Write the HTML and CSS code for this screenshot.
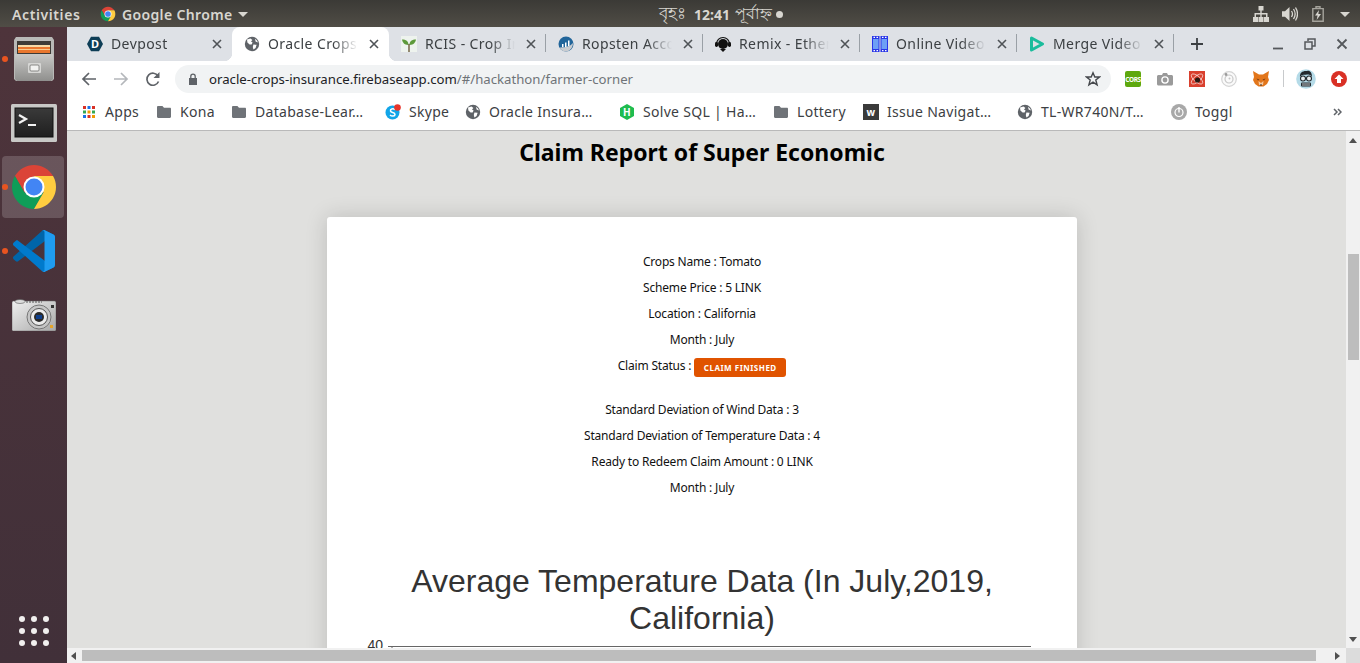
FILE: index.html
```html
<!DOCTYPE html>
<html lang="en">
<head>
<meta charset="utf-8">
<title>Oracle Crops Insurance</title>
<link rel="stylesheet" href="styles.css">
</head>
<body>
<svg class="defs" width="0" height="0">
  <defs>
    <symbol id="chrome" viewBox="0 0 48 48">
      <path fill="#db4437" d="M43.05 13A22 22 0 0 0 4.95 13L14.47 29.5 24 13Z"/>
      <path fill="#0f9d58" d="M4.95 13A22 22 0 0 0 24 46L33.53 29.5H14.47Z"/>
      <path fill="#ffcd40" d="M43.05 13A22 22 0 0 1 24 46L33.53 29.5 24 13Z"/>
      <circle cx="24" cy="24" r="10.5" fill="#fff"/>
      <circle cx="24" cy="24" r="8.5" fill="#4285f4"/>
    </symbol>
    <symbol id="globe" viewBox="0 0 16 16">
      <circle cx="8" cy="8" r="7.2" fill="#5f6368"/>
      <path fill="#fff" d="M3 3.6 6.5 2.6 8.4 4 7 5.4 8.6 6.6 7.6 8.6 5.6 8.4 3.4 6.4ZM9.4 8.6 12.6 8.8 11.6 12 9.4 13.6 8.8 11Z M11 2.8 13 4.4 14 6.6 11.6 5.6Z"/>
    </symbol>
    <symbol id="folder" viewBox="0 0 16 16">
      <path fill="#6f7378" d="M1 3.2C1 2.5 1.5 2 2.2 2H6.4L8 3.8H14C14.6 3.8 15 4.3 15 4.8V12.8C15 13.5 14.5 14 13.8 14H2.2C1.5 14 1 13.5 1 12.8Z"/>
    </symbol>
    <symbol id="close" viewBox="0 0 12 12">
      <path stroke="#4f5357" stroke-width="1.6" fill="none" d="M2 2 10 10M10 2 2 10"/>
    </symbol>
  </defs>
</svg>

<header class="topbar">
  <div class="topbar-left">
    <span class="activities">Activities</span>
    <span class="appmenu">
      <svg class="appmenu-icon"><use href="#chrome"/></svg>
      <span class="appmenu-name">Google Chrome</span>
      <svg class="caret" viewBox="0 0 10 5"><path d="M0 0H10L5 5Z"/></svg>
    </span>
  </div>
  <div class="clock"><span class="clock-day">বৃহঃ</span><b class="clock-time">12:41</b><span class="clock-ampm">পূর্বাহ্ন</span><i class="clock-dot"></i></div>
  <div class="tray">
    <svg class="tray-net" viewBox="0 0 16 16"><path fill="#d8d6d0" d="M5.5 0H10.500V4.500H8.700V7H14.500V11H16V16H11V11H13V8.500H8.700V11H10.500V16H5.500V11H7.300V8.500H3V11H5V16H0V11H1.500V7H7.300V4.500H5.500Z"/></svg>
    <svg class="tray-vol" viewBox="0 0 16 16"><path fill="#d8d6d0" d="M0 5.200H3L7.500 1V15L3 10.800H0Z"/><path fill="none" stroke="#d8d6d0" stroke-width="1.300" d="M9.500 5Q11.500 8 9.500 11M11.500 3Q14.800 8 11.500 13M13.500 1.500Q17.500 8 13.500 14.500"/></svg>
    <svg class="tray-bat" viewBox="0 0 12 16"><path fill="none" stroke="#a5a39c" stroke-width="1.400" d="M.8 2.600H11.200V15.300H.8ZM4 2.600V.8H8V2.600"/><path fill="#d8d6d0" d="M7 4 3 9.500H5.600L4.600 14 9 8H6.300Z"/></svg>
    <svg class="caret" viewBox="0 0 10 5"><path d="M0 0H10L5 5Z"/></svg>
  </div>
</header>

<div class="desktop">
  <nav class="dock">
    <div class="dock-item">
      <i class="run-dot"></i>
      <svg class="dock-files" viewBox="0 0 40 44">
        <defs><linearGradient id="cab" x1="0" y1="0" x2="0" y2="1"><stop offset="0" stop-color="#c9c9c7"/><stop offset="1" stop-color="#8f8f8d"/></linearGradient></defs>
        <path fill="#b9b9b7" d="M2 0H38L40 3V42L38 44H2L0 42V3Z"/>
        <rect x="3" y="4" width="34" height="13" fill="#3d3a36"/>
        <rect x="4" y="9" width="32" height="7" fill="#e9772e"/>
        <rect x="4" y="8" width="32" height="2" fill="#f5d9a6"/>
        <rect x="4" y="12" width="32" height="1" fill="#f9c98b"/>
        <path fill="url(#cab)" d="M1 17H39V42L37 44H3L1 42Z"/>
        <rect x="14" y="26" width="13" height="10" rx="1" fill="#d7d7d5"/>
        <rect x="16" y="28" width="9" height="6" rx="1" fill="#f2f2f0" stroke="#6f6f6d" stroke-width=".8"/>
      </svg>
    </div>
    <div class="dock-item">
      <svg class="dock-term" viewBox="0 0 46 38">
        <defs><linearGradient id="termbg" x1="0" y1="0" x2="0" y2="1"><stop offset="0" stop-color="#3a3a3a"/><stop offset="1" stop-color="#1f1f1f"/></linearGradient></defs>
        <rect width="46" height="38" rx="1.500" fill="#c8c8c6"/>
        <rect x="4" y="4" width="38" height="29" fill="url(#termbg)" stroke="#111"/>
        <path d="M8 11 15 15 8 19" fill="none" stroke="#f2f2f2" stroke-width="2.200"/>
        <rect x="17" y="20" width="8" height="2" fill="#f2f2f2"/>
      </svg>
    </div>
    <div class="dock-item dock-active">
      <i class="run-dot"></i>
      <svg class="dock-chrome"><use href="#chrome"/></svg>
    </div>
    <div class="dock-item">
      <i class="run-dot"></i>
      <svg class="dock-code" viewBox="0 0 100 100">
        <path fill="#0065a9" d="M96.460 10.800 75.860.9C73.470-.25 70.620.23 68.750 2.110L1.300 63.200C-.51 64.850-.51 67.700 1.310 69.350L6.820 74.350C8.310 75.700 10.550 75.800 12.150 74.590L93.360 13.370C96.080 11.310 100 13.250 100 16.670V16.430C100 14.030 98.620 11.840 96.460 10.800Z"/>
        <path fill="#007acc" d="M96.460 89.200 75.860 99.100C73.470 100.250 70.620 99.770 68.750 97.890L1.300 36.800C-.51 35.150-.51 32.300 1.310 30.650L6.820 25.650C8.310 24.300 10.550 24.200 12.150 25.410L93.360 86.630C96.080 88.690 100 86.750 100 83.330V83.570C100 85.970 98.620 88.160 96.460 89.200Z"/>
        <path fill="#1f9cf0" d="M75.860 99.130C73.470 100.280 70.620 99.790 68.750 97.920 71.060 100.230 75 98.590 75 95.340V4.660C75 1.400 71.060-.23 68.750 2.080 70.620.21 73.470-.28 75.860.87L96.460 10.780C98.600 11.810 100 14 100 16.380V83.620C100 86 98.640 88.190 96.460 89.240Z"/>
      </svg>
    </div>
    <div class="dock-item">
      <svg class="dock-cam" viewBox="0 0 44 32">
        <defs><linearGradient id="body" x1="0" y1="0" x2="1" y2="1"><stop offset="0" stop-color="#f0f0f0"/><stop offset="1" stop-color="#a8a8a8"/></linearGradient></defs>
        <rect y="2" width="44" height="30" rx="1.500" fill="url(#body)" stroke="#666" stroke-width=".5"/>
        <ellipse cx="8" cy="2.500" rx="5" ry="2" fill="#ddd" stroke="#555" stroke-width=".6"/>
        <path d="M14 3H30" stroke="#555" stroke-width="1" stroke-dasharray="2 1"/>
        <circle cx="27" cy="18" r="12" fill="#c6c6c6" stroke="#777"/>
        <circle cx="27" cy="18" r="8.500" fill="#ececec" stroke="#555"/>
        <circle cx="27" cy="18" r="5" fill="#2a2a2a"/>
        <rect x="24" y="16" width="6" height="4" fill="#0f3f8a"/>
        <rect x="38" y="26" width="3" height="3" fill="#e6a42a"/>
        <rect x="39" y="6" width="3" height="3" fill="#333"/>
      </svg>
    </div>
    <div class="dock-apps">
      <i></i><i></i><i></i><i></i><i></i><i></i><i></i><i></i><i></i>
    </div>
  </nav>

  <main class="browser">
    <div class="tabstrip">
      <div class="tab tab-sep-off">
        <svg class="fav" viewBox="0 0 16 16"><path fill="#0d3d56" d="M4 .8H12L16 8 12 15.200H4L0 8Z"/><text class="fav-d" x="8" y="11.700">D</text></svg>
        <span class="tab-title">Devpost</span>
        <svg class="tab-x"><use href="#close"/></svg>
      </div>
      <div class="tab tab-active">
        <svg class="fav"><use href="#globe"/></svg>
        <span class="tab-title">Oracle Crops Insurance</span>
        <svg class="tab-x"><use href="#close"/></svg>
      </div>
      <div class="tab">
        <svg class="fav" viewBox="0 0 16 16"><rect width="16" height="16" fill="#eef3ee"/><path fill="#5d9a3a" d="M7.500 9C3 9 1.500 6 1 3.500 5 3.500 7.500 5 7.500 9ZM8.500 9C8.500 5 11 3.500 15 3.500 14.500 6 13 9 8.500 9Z"/><rect x="7.300" y="8" width="1.400" height="8" fill="#6b5a3a"/></svg>
        <span class="tab-title">RCIS - Crop Insurance</span>
        <svg class="tab-x"><use href="#close"/></svg>
      </div>
      <div class="tab">
        <svg class="fav" viewBox="0 0 16 16"><circle cx="8" cy="8" r="7.500" fill="#21659a"/><path fill="#c9ccd0" d="M1.500 11.500C5 11.500 12 11 15 7 15 12 11 15.500 8 15.500 5 15.500 3 14 1.500 11.500Z"/><path fill="#fff" d="M4 8H5.500V11H4ZM7 6.500H8.500V11H7ZM10 4.500H11.500V10H10Z"/></svg>
        <span class="tab-title">Ropsten Accounts</span>
        <svg class="tab-x"><use href="#close"/></svg>
      </div>
      <div class="tab">
        <svg class="fav" viewBox="0 0 16 16"><path fill="none" stroke="#111" stroke-width="1.200" d="M1.500 8A6.500 6.500 0 0 1 14.500 8"/><circle cx="8" cy="8" r="5" fill="#111"/><rect x="0" y="6" width="3" height="5" rx="1.400" fill="#111"/><rect x="13" y="6" width="3" height="5" rx="1.400" fill="#111"/><path fill="#111" d="M5 13H11L8 16Z"/></svg>
        <span class="tab-title">Remix - Ethereum IDE</span>
        <svg class="tab-x"><use href="#close"/></svg>
      </div>
      <div class="tab">
        <svg class="fav" viewBox="0 0 16 16"><rect width="7.500" height="16" fill="#2a36e8"/><rect x="8.500" width="7.500" height="16" fill="#2a36e8"/><rect x="1" y="3" width="5.500" height="10" fill="#6ea0f5"/><rect x="9.500" y="3" width="5.500" height="10" fill="#6ea0f5"/><path d="M1.500 .8H3V2H1.500ZM4.500 .8H6V2H4.500ZM10 .8H11.500V2H10ZM13 .8H14.500V2H13ZM1.500 14H3V15.200H1.500ZM4.500 14H6V15.200H4.500ZM10 14H11.500V15.200H10ZM13 14H14.500V15.200H13Z" fill="#fff"/></svg>
        <span class="tab-title">Online Video Cutter</span>
        <svg class="tab-x"><use href="#close"/></svg>
      </div>
      <div class="tab">
        <svg class="fav" viewBox="0 0 16 16"><path fill="none" stroke="#1abc9c" stroke-width="3" stroke-linejoin="round" d="M2.500 2 13.500 8 2.500 14Z"/></svg>
        <span class="tab-title">Merge Video Online</span>
        <svg class="tab-x"><use href="#close"/></svg>
      </div>
      <svg class="tab-new" viewBox="0 0 12 12"><path d="M6 0V12M0 6H12" stroke="#3c4043" stroke-width="1.800"/></svg>
      <div class="winctl">
        <svg viewBox="0 0 12 12"><path d="M1 10.500H11" stroke="#55585c" stroke-width="1.800"/></svg>
        <svg viewBox="0 0 12 12"><path fill="none" stroke="#55585c" stroke-width="1.500" d="M4 3V1H11V8H8.500M1 4H8V11H1Z"/></svg>
        <svg viewBox="0 0 12 12"><path d="M1.500 1.500 10.500 10.500M10.500 1.500 1.500 10.500" stroke="#55585c" stroke-width="1.800"/></svg>
      </div>
    </div>

    <div class="toolbar">
      <svg class="nav" viewBox="0 0 16 16"><path fill="none" stroke="#5f6368" stroke-width="1.700" d="M15 8H2M8 2 2 8 8 14"/></svg>
      <svg class="nav" viewBox="0 0 16 16"><path fill="none" stroke="#b4b7bb" stroke-width="1.700" d="M1 8H14M8 2 14 8 8 14"/></svg>
      <svg class="nav" viewBox="0 0 16 16"><path fill="none" stroke="#5f6368" stroke-width="1.700" d="M13.500 10.500A6 6 0 1 1 13 5"/><path fill="#5f6368" d="M14.500 1V7H8.500Z"/></svg>
      <div class="omnibox">
        <svg class="lock" viewBox="0 0 10 12"><path fill="#5f6368" d="M1 5H9V12H1Z"/><path fill="none" stroke="#5f6368" stroke-width="1.300" d="M2.800 5V3.300A2.200 2.200 0 0 1 7.200 3.300V5"/></svg>
        <span class="url"><span class="url-host">oracle-crops-insurance.firebaseapp.com</span>/#/hackathon/farmer-corner</span>
        <svg class="star" viewBox="0 0 16 16"><path fill="none" stroke="#45484c" stroke-width="1.400" d="M8 1.800 9.800 6H14.500L10.800 9 12.100 13.800 8 11.100 3.900 13.800 5.200 9 1.500 6H6.200Z"/></svg>
      </div>
      <div class="exts">
        <svg viewBox="0 0 16 16"><rect width="16" height="16" rx="2" fill="#5ea80f"/><text class="cors" x="8" y="10.700">CORS</text></svg>
        <svg viewBox="0 0 16 16"><path fill="#9a9a9a" d="M1.500 4H5L6 2H10L11 4H14.500C15.300 4 16 4.700 16 5.500V13C16 13.800 15.300 14.500 14.500 14.500H1.500C.7 14.500 0 13.800 0 13V5.500C0 4.700.7 4 1.500 4Z"/><circle cx="8" cy="9" r="3.800" fill="#fff"/><circle cx="8" cy="9" r="2.400" fill="#9a9a9a"/></svg>
        <svg viewBox="0 0 16 16"><rect width="16" height="16" fill="#d9402e"/><ellipse cx="8" cy="8" rx="7" ry="3" fill="none" stroke="#fff" stroke-width=".6" transform="rotate(40 8 8)"/><ellipse cx="8" cy="8" rx="7" ry="3" fill="none" stroke="#fff" stroke-width=".6" transform="rotate(-40 8 8)"/><circle cx="8.500" cy="9" r="2.600" fill="#2b1a14"/></svg>
        <svg viewBox="0 0 16 16"><circle cx="8" cy="8" r="7.300" fill="#fafafa" stroke="#d4d4d4" stroke-width="1.200"/><circle cx="8" cy="8" r="4" fill="none" stroke="#c8c8c8" stroke-width="1.200"/><circle cx="5" cy="3.500" r="1.400" fill="#9a9a9a"/><circle cx="8.500" cy="7.500" r="1" fill="#c4c4c4"/></svg>
        <svg viewBox="0 0 16 16"><path fill="#e2761b" d="M0 0 6 3.500H10L16 0 15 6 16 9 14 13 10.500 15.500H5.500L2 13 0 9 1 6Z"/><path fill="#f6c9a0" d="M5.500 10 8 12 10.500 10 10 14H6Z"/><path fill="#763d16" d="M3.500 7.500 6.500 8.500 5 9.500ZM12.500 7.500 9.500 8.500 11 9.500Z"/><path fill="#2b2b2b" d="M6.800 13.500H9.200L8 15Z"/></svg>
        <i class="ext-sep"></i>
        <svg class="ext-avatar" viewBox="0 0 20 20"><circle cx="10" cy="10" r="9.800" fill="#b5dbe8"/><path fill="#23292e" d="M4 8C3.500 3.500 7 1.500 11 2 13.500 1 16 3 16 8 15 6 13 5.500 11 5.500 8 6 5 5.500 4 8Z"/><circle cx="7" cy="9.500" r="2.500" fill="#e8eef0" stroke="#23292e" stroke-width="1.100"/><circle cx="13" cy="9.500" r="2.500" fill="#e8eef0" stroke="#23292e" stroke-width="1.100"/><rect x="5" y="13.500" width="10" height="4" rx="1" fill="#23292e"/><path d="M7 14V17M9 14V17M11 14V17M13 14V17" stroke="#e8eef0" stroke-width=".8"/></svg>
        <svg class="ext-update" viewBox="0 0 16 16"><circle cx="8" cy="8" r="8" fill="#d93025"/><path fill="#fff" d="M8 3.500 12.500 8H10V12H6V8H3.500Z"/></svg>
      </div>
    </div>

    <div class="bookmarks">
      <span class="bm"><svg class="bm-icon bm-grid" viewBox="0 0 14 14"><path fill="#d93025" d="M1 1H4V4H1Z"/><path fill="#1a73e8" d="M5.500 1H8.500V4H5.500Z"/><path fill="#d93025" d="M10 1H13V4H10Z"/><path fill="#34a853" d="M1 5.500H4V8.500H1Z"/><path fill="#f29900" d="M5.500 5.500H8.500V8.500H5.500Z"/><path fill="#34a853" d="M10 5.500H13V8.500H10Z"/><path fill="#1a73e8" d="M1 10H4V13H1Z"/><path fill="#d93025" d="M5.500 10H8.500V13H5.500Z"/><path fill="#f29900" d="M10 10H13V13H10Z"/></svg>Apps</span>
      <span class="bm"><svg class="bm-icon"><use href="#folder"/></svg>Kona</span>
      <span class="bm"><svg class="bm-icon"><use href="#folder"/></svg>Database-Lear…</span>
      <span class="bm"><svg class="bm-icon" viewBox="0 0 16 16"><circle cx="7.500" cy="8.500" r="7" fill="#12a5e8"/><path d="M10 5.800C8 4 5 5 5.500 7 6 9 10 8 10 10.500 10 12.500 6.500 12.500 5 11" fill="none" stroke="#fff" stroke-width="1.500"/><circle cx="12.500" cy="3.500" r="3.300" fill="#e8352b"/></svg>Skype</span>
      <span class="bm"><svg class="bm-icon"><use href="#globe"/></svg>Oracle Insura…</span>
      <span class="bm"><svg class="bm-icon" viewBox="0 0 16 16"><path fill="#1ebc4e" d="M8 0 15 4V12L8 16 1 12V4Z"/><text class="hr" x="8" y="11.500">H</text></svg>Solve SQL | Ha…</span>
      <span class="bm"><svg class="bm-icon"><use href="#folder"/></svg>Lottery</span>
      <span class="bm"><svg class="bm-icon" viewBox="0 0 16 16"><rect width="16" height="16" fill="#3a3a3a"/><text class="wk" x="8" y="12">w</text></svg>Issue Navigat…</span>
      <span class="bm"><svg class="bm-icon"><use href="#globe"/></svg>TL-WR740N/T…</span>
      <span class="bm"><svg class="bm-icon" viewBox="0 0 16 16"><circle cx="8" cy="8" r="8" fill="#a8a8a8"/><circle cx="8" cy="8.500" r="4" fill="none" stroke="#fff" stroke-width="1.200"/><rect x="7.300" y="3" width="1.400" height="5.500" fill="#fff"/></svg>Toggl</span>
      <svg class="bm-more" viewBox="0 0 9 8"><path d="M1 1 4 4 1 7M5 1 8 4 5 7" fill="none" stroke="#5f6368" stroke-width="1.500"/></svg>
    </div>

    <div class="viewport">
      <div class="page">
        <div class="page-inner">
          <h2 class="report-title">Claim Report of Super Economic</h2>
          <section class="card">
            <div class="facts">
              <p>Crops Name : Tomato</p>
              <p>Scheme Price : 5 LINK</p>
              <p>Location : California</p>
              <p>Month : July</p>
              <p>Claim Status : <span class="badge">CLAIM FINISHED</span></p>
            </div>
            <div class="facts">
              <p>Standard Deviation of Wind Data : 3</p>
              <p>Standard Deviation of Temperature Data : 4</p>
              <p>Ready to Redeem Claim Amount : 0 LINK</p>
              <p>Month : July</p>
            </div>
            <h3 class="chart-title">Average Temperature Data (In July,2019, California)</h3>
            <svg class="chart" viewBox="0 0 750 40">
              <text class="chart-tick" x="56" y="13">40</text>
              <path d="M61 9.500H704" stroke="#666" fill="none"/>
              <path d="M65 9.500V12" stroke="#666" fill="none"/>
            </svg>
          </section>
        </div>
      </div>
      <div class="vbar">
        <svg class="arrow" viewBox="0 0 8 5"><path d="M4 0 8 5H0Z"/></svg>
        <i class="vthumb"></i>
        <svg class="arrow arrow-end" viewBox="0 0 8 5"><path d="M4 5 8 0H0Z"/></svg>
      </div>
      <div class="hbar">
        <svg class="arrow-h" viewBox="0 0 5 8"><path d="M0 4 5 0V8Z"/></svg>
        <i class="hthumb"></i>
        <svg class="arrow-h" viewBox="0 0 5 8"><path d="M5 4 0 0V8Z"/></svg>
      </div>
      <div class="corner"></div>
    </div>
  </main>
</div>
</body>
</html>
```
FILE: styles.css
```css
* { box-sizing: border-box; }
html, body { margin: 0; height: 100%; }
body {
  width: 1360px;
  height: 663px;
  overflow: hidden;
  display: flex;
  flex-direction: column;
  font-family: "Noto Sans", "Open Sans", sans-serif;
  background: #e0e0de;
}
.defs { position: absolute; }

/* GNOME top bar */
.topbar {
  height: 27px;
  flex: none;
  display: grid;
  grid-template-columns: 659px auto 1fr;
  align-items: center;
  background: linear-gradient(#3b3a36, #504d46);
  color: #d8d6d0;
  font-size: 14px;
}
.topbar-left { display: flex; align-items: center; padding-left: 12px; }
.activities { width: 88px; font-weight: 600; letter-spacing: .6px; }
.appmenu { display: flex; align-items: center; gap: 6px; font-weight: 600; }
.appmenu-name { letter-spacing: .35px; }
.appmenu-icon { width: 16px; height: 16px; }
.caret { width: 10px; height: 5px; fill: #d8d6d0; }
.clock { display: flex; align-items: center; white-space: nowrap; }
.clock-day { font-size: 17px; margin-right: 8px; }
.clock-time { font-size: 14px; margin-right: 5px; }
.clock-ampm { font-size: 16px; margin-right: 4px; }
.clock-dot { width: 7px; height: 7px; border-radius: 50%; background: #d8d6d0; }
.tray { display: flex; align-items: center; justify-content: flex-end; padding-right: 10px; }
.tray-net { width: 16px; height: 16px; margin-right: 13px; }
.tray-vol { width: 16px; height: 16px; margin-right: 14px; }
.tray-bat { width: 12px; height: 16px; margin-right: 16px; }

.desktop { flex: 1; display: flex; min-height: 0; }

/* Dock */
.dock {
  width: 67px;
  flex: none;
  display: flex;
  flex-direction: column;
  background: linear-gradient(#4e343b, #413039);
}
.dock-item {
  position: relative;
  height: 64px;
  flex: none;
  display: flex;
  align-items: center;
  justify-content: center;
}
.dock-active::before {
  content: "";
  position: absolute;
  left: 2px;
  top: 1px;
  width: 62px;
  height: 62px;
  border-radius: 4px;
  background: rgba(255, 255, 255, .17);
}
.run-dot {
  position: absolute;
  left: 2px;
  top: 29px;
  width: 6px;
  height: 6px;
  border-radius: 50%;
  background: #e95420;
}
.dock-files { width: 40px; height: 44px; position: relative; }
.dock-term { width: 46px; height: 38px; }
.dock-chrome { width: 48px; height: 48px; position: relative; }
.dock-code { width: 42px; height: 42px; }
.dock-cam { width: 44px; height: 32px; }
.dock-apps {
  margin-top: auto;
  height: 64px;
  display: grid;
  grid-template-columns: repeat(3, 6px);
  grid-auto-rows: 6px;
  gap: 6px;
  justify-content: center;
  align-content: center;
}
.dock-apps i { border-radius: 50%; background: #f1efee; }

/* Chrome */
.browser { flex: 1; min-width: 0; display: flex; flex-direction: column; background: #fff; }
.tabstrip {
  height: 34px;
  flex: none;
  display: flex;
  padding-left: 8px;
  background: #dee1e6;
  color: #3c4043;
}
.tab {
  position: relative;
  width: 157px;
  flex: none;
  display: flex;
  align-items: center;
  padding: 0 0 1px 12px;
  font-size: 14px;
  letter-spacing: .4px;
}
.tab::after {
  content: "";
  position: absolute;
  right: 0;
  top: 7px;
  height: 18px;
  width: 1px;
  background: #9aa0a6;
}
.tab-sep-off::after { display: none; }
.tab-active {
  background: #fff;
  border-radius: 8px 8px 0 0;
}
.tab-active::after {
  top: auto;
  bottom: 0;
  right: -8px;
  width: 8px;
  height: 8px;
  background: radial-gradient(circle at 100% 0, transparent 8px, #fff 8.5px);
}
.tab-active::before {
  content: "";
  position: absolute;
  bottom: 0;
  left: -8px;
  width: 8px;
  height: 8px;
  background: radial-gradient(circle at 0 0, transparent 8px, #fff 8.5px);
}
.fav { width: 16px; height: 16px; flex: none; margin-right: 8px; }
.fav-d { font: bold 11px "Noto Sans", sans-serif; fill: #fff; text-anchor: middle; letter-spacing: 0; }
.tab-title {
  width: 90px;
  flex: none;
  line-height: 18px;
  overflow: hidden;
  white-space: nowrap;
  -webkit-mask-image: linear-gradient(90deg, #000 72%, transparent 100%);
  mask-image: linear-gradient(90deg, #000 72%, transparent 100%);
}
.tab-x { width: 12px; height: 12px; flex: none; margin-left: 10px; }
.tab-new { width: 12px; height: 12px; flex: none; margin: 11px 0 0 17px; }
.winctl { margin-left: auto; display: flex; align-items: center; }
.winctl svg { width: 12px; height: 12px; margin-right: 20px; }
.winctl svg:last-child { margin-right: 12px; }

.toolbar {
  height: 35px;
  flex: none;
  display: flex;
  align-items: center;
  padding: 0 14px 0 14px;
  background: #fff;
}
.nav { width: 16px; height: 16px; flex: none; margin-right: 16px; }
.nav:nth-child(3) { margin-right: 14px; }
.omnibox {
  width: 936px;
  height: 28px;
  flex: none;
  display: flex;
  align-items: center;
  padding: 0 10px 0 13px;
  border-radius: 14px;
  background: #f1f3f4;
  font-size: 13.2px;
  color: #6f7378;
}
.lock { width: 10px; height: 12px; flex: none; margin-right: 11px; }
.url { flex: 1; white-space: nowrap; }
.url-host { color: #202124; }
.star { width: 16px; height: 16px; flex: none; }
.exts { display: flex; align-items: center; padding-left: 14px; }
.exts svg { width: 16px; height: 16px; flex: none; margin-right: 16px; }
.exts svg:nth-child(5) { margin-right: 14px; }
.cors { font: bold 6.5px "Noto Sans", sans-serif; fill: #fff; text-anchor: middle; letter-spacing: -.4px; }
.ext-sep { width: 1px; height: 17px; background: #c8cacc; margin-right: 12px; }
.exts .ext-avatar { width: 20px; height: 20px; margin-right: 15px; }

.bookmarks {
  height: 35px;
  flex: none;
  display: grid;
  grid-template-columns: 74px 75px 154px 80px 154px 154px 90px 154px 154px 1fr 27px;
  align-items: center;
  padding: 0 0 3px 15px;
  border-bottom: 1px solid #b9b9b9;
  background: #fff;
  font-size: 14px;
  letter-spacing: .3px;
  color: #3c4043;
}
.bm { display: flex; align-items: center; white-space: nowrap; }
.bm-icon { width: 16px; height: 16px; flex: none; margin-right: 8px; }
.bm-grid { width: 14px; height: 14px; margin-right: 9px; }
.bm-more { width: 9px; height: 8px; }
.hr { font: bold 10px "Noto Sans", sans-serif; fill: #fff; text-anchor: middle; }
.wk { font: bold 10px "Noto Sans", sans-serif; fill: #fff; text-anchor: middle; }

/* Page */
.viewport {
  flex: 1;
  min-height: 0;
  display: grid;
  grid-template-columns: 1fr 14px;
  grid-template-rows: 1fr 15px;
}
.page { overflow: hidden; background: #e0e0de; }
.page-inner { width: 1270px; padding-top: 7px; }
.report-title {
  margin: 0 0 51px;
  font-size: 23px;
  line-height: 28px;
  font-weight: 700;
  text-align: center;
  color: #000;
}
.card {
  width: 750px;
  height: 700px;
  margin: 0 auto;
  padding-top: 28px;
  background: #fff;
  border-radius: 3px;
  box-shadow: 0 0 22px rgba(0, 0, 0, .16);
  color: #111;
}
.facts { margin-bottom: 24px; font-size: 12px; line-height: 18px; letter-spacing: -.19px; text-align: center; }
.facts p { margin: 8px 0; }
.badge {
  display: inline-block;
  width: 92px;
  height: 19px;
  margin-top: 1px;
  border-radius: 3px;
  background: #e05300;
  color: #fff;
  font-size: 8px;
  line-height: 19px;
  font-weight: 700;
  letter-spacing: .5px;
  text-align: center;
  vertical-align: top;
}
.chart-title {
  width: 620px;
  margin: 66px auto 0;
  font-family: "Liberation Sans", Arial, sans-serif;
  font-size: 32px;
  line-height: 37px;
  font-weight: 400;
  text-align: center;
  color: #333;
}
.chart { display: block; width: 750px; height: 40px; }
.chart-tick { font: 14px "Liberation Sans", Arial, sans-serif; fill: #333; text-anchor: end; }

/* Scrollbars */
.vbar {
  display: flex;
  flex-direction: column;
  align-items: center;
  background: #f1f1f1;
  padding: 7px 0 6px;
}
.arrow { width: 8px; height: 5px; fill: #505050; flex: none; }
.vthumb { width: 11px; height: 106px; margin-top: 111px; background: #bdbdbd; flex: none; }
.arrow-end { margin-top: auto; }
.hbar {
  display: flex;
  align-items: center;
  padding: 0 6px 0 4px;
  background: #f1f1f1;
}
.arrow-h { width: 5px; height: 8px; fill: #505050; flex: none; }
.hthumb { width: 1234px; height: 11px; margin: 0 auto 0 6px; background: #bdbdbd; }
.corner { background: #dcdcdc; }
```
